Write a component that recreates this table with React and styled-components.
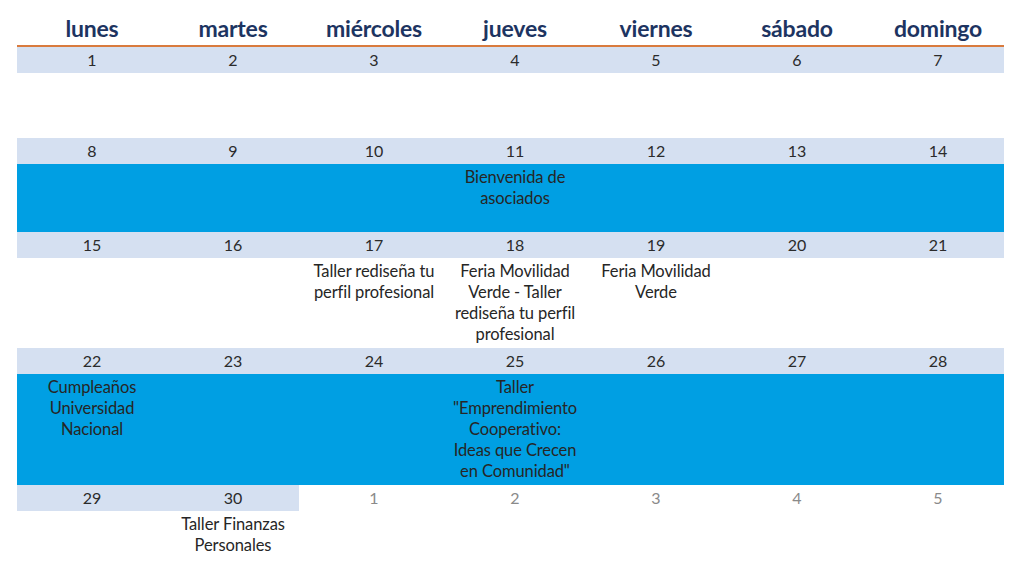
import React from 'react';
import styled, { createGlobalStyle } from 'styled-components';

const GlobalStyle = createGlobalStyle`
  html, body {
    margin: 0;
    padding: 0;
    background: #ffffff;
  }
  body {
    font-family: Lato, "Open Sans", sans-serif;
  }
`;

const dayNames = ['lunes', 'martes', 'miércoles', 'jueves', 'viernes', 'sábado', 'domingo'];

const weeks = [
  {
    days: [1, 2, 3, 4, 5, 6, 7],
    height: 65,
    highlight: false,
    events: {},
  },
  {
    days: [8, 9, 10, 11, 12, 13, 14],
    height: 68,
    highlight: true,
    events: { 3: 'Bienvenida de\nasociados' },
  },
  {
    days: [15, 16, 17, 18, 19, 20, 21],
    height: 90,
    highlight: false,
    events: {
      2: 'Taller rediseña tu\nperfil profesional',
      3: 'Feria Movilidad\nVerde - Taller\nrediseña tu perfil\nprofesional',
      4: 'Feria Movilidad\nVerde',
    },
  },
  {
    days: [22, 23, 24, 25, 26, 27, 28],
    height: 111,
    highlight: true,
    events: {
      0: 'Cumpleaños\nUniversidad\nNacional',
      3: 'Taller\n"Emprendimiento\nCooperativo:\nIdeas que Crecen\nen Comunidad"',
    },
  },
  {
    days: [29, 30, 1, 2, 3, 4, 5],
    outside: [false, false, true, true, true, true, true],
    height: 67,
    highlight: false,
    events: { 1: 'Taller Finanzas\nPersonales' },
  },
];

const Page = styled.div`
  padding: 0 20px 0 17px;
  width: 987px;
`;

const HeaderRow = styled.div`
  display: grid;
  grid-template-columns: repeat(7, 141px);
  height: 45px;
  border-bottom: 2px solid #d97b3e;
`;

const DayName = styled.div`
  display: flex;
  align-items: flex-end;
  justify-content: center;
  padding: 0 0 3px 9px;
  font-size: 23px;
  font-weight: 700;
  color: #1d3461;
  letter-spacing: -0.2px;
`;

const Row = styled.div`
  display: grid;
  grid-template-columns: repeat(7, 141px);
`;

const NumberCell = styled.div`
  height: 26px;
  display: flex;
  align-items: center;
  justify-content: center;
  padding: 0 0 1px 9px;
  box-sizing: border-box;
  font-size: 16px;
  color: ${(p) => (p.$outside ? '#8a8a8a' : '#2b2b2b')};
  background: ${(p) => (p.$outside ? '#ffffff' : '#d5e0f1')};
`;

const EventRow = styled(Row)`
  height: ${(p) => p.$height}px;
  background: ${(p) => (p.$highlight ? '#009fe3' : '#ffffff')};
`;

const EventCell = styled.div`
  padding: 3px 0 0 9px;
  text-align: center;
  white-space: pre-line;
  font-size: 16.5px;
  line-height: 21px;
  color: #262626;
  letter-spacing: -0.1px;
`;

const Week = ({ week }) => (
  <>
    <Row>
      {week.days.map((d, i) => (
        <NumberCell key={i} $outside={week.outside && week.outside[i]}>
          {d}
        </NumberCell>
      ))}
    </Row>
    <EventRow $height={week.height} $highlight={week.highlight}>
      {week.days.map((d, i) => (
        <EventCell key={i}>{week.events[i] || ''}</EventCell>
      ))}
    </EventRow>
  </>
);

export default function App() {
  return (
    <>
      <GlobalStyle />
      <Page>
        <HeaderRow>
          {dayNames.map((n) => (
            <DayName key={n}>{n}</DayName>
          ))}
        </HeaderRow>
        {weeks.map((w, i) => (
          <Week key={i} week={w} />
        ))}
      </Page>
    </>
  );
}
